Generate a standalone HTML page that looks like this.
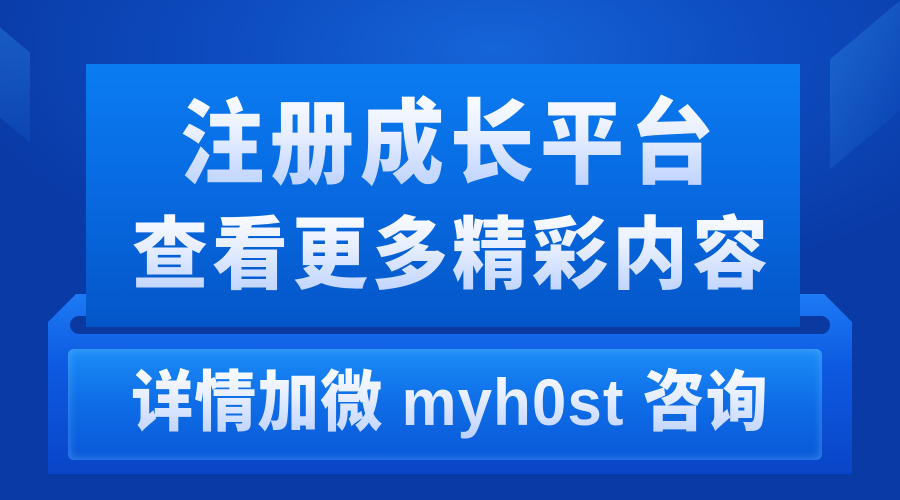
<!DOCTYPE html>
<html><head><meta charset="utf-8"><style>
*{margin:0;padding:0;box-sizing:border-box}
body{width:900px;height:500px;overflow:hidden;position:relative;
background:radial-gradient(ellipse 60% 50% at 55% 10%,#1565d8 0%,#0d4cc0 50%,#0a3aa6 100%);
font-family:"Liberation Sans","Noto Sans CJK SC",sans-serif}
.deco{position:absolute;background:linear-gradient(135deg,#2a7fe0,#0e4fc0);opacity:.45}
.outer{position:absolute;left:48px;top:294px;width:804px;height:180px;
background:linear-gradient(180deg,#1d7af5 0%,#0d5ae0 40%,#0a45c8 100%);
clip-path:polygon(28px 0,776px 0,804px 28px,804px 180px,0 180px,0 28px)}
.slot{position:absolute;left:70px;top:316px;width:760px;height:18px;border-radius:9px;background:#0a3aa0}
.card{position:absolute;left:86px;top:64px;width:714px;height:263px;
background:linear-gradient(180deg,#0a7cf2 0%,#0869e0 50%,#0456c8 100%)}
.btn{position:absolute;left:68px;top:349px;width:754px;height:111px;border-radius:6px;
background:linear-gradient(180deg,#1b8cf8 0%,#0e6ce6 50%,#0a58d8 100%);
box-shadow:inset 0 0 10px rgba(120,190,255,.5)}
.t{position:absolute;left:0;width:900px;text-align:center;font-weight:900;white-space:nowrap;
background:linear-gradient(180deg,#ffffff 0%,#e8efff 40%,#b2cbff 100%);
-webkit-background-clip:text;background-clip:text;color:transparent}
.l1{top:92px;font-size:84px;letter-spacing:6px;line-height:104px;transform:scaleY(1.1);transform-origin:50% 50%}
.l2{top:206px;font-size:76px;letter-spacing:4px;line-height:100px;padding-left:4px;transform:scaleY(1.04)}
.l3{top:363px;font-size:62px;line-height:82px;letter-spacing:1px;height:82px;transform:scaleY(1.06)}
</style></head><body>
<div class="deco" style="left:0;top:40px;width:30px;height:90px;transform:skewY(40deg)"></div>
<div class="deco" style="left:830px;top:30px;width:70px;height:110px;transform:skewY(-40deg)"></div>
<div class="outer"></div>
<div class="slot"></div>
<div class="card"></div>
<div class="btn"></div>
<div class="t l1">注册成长平台</div>
<div class="t l2">查看更多精彩内容</div>
<div class="t l3">详情加微 myh0st 咨询</div>
</body></html>
